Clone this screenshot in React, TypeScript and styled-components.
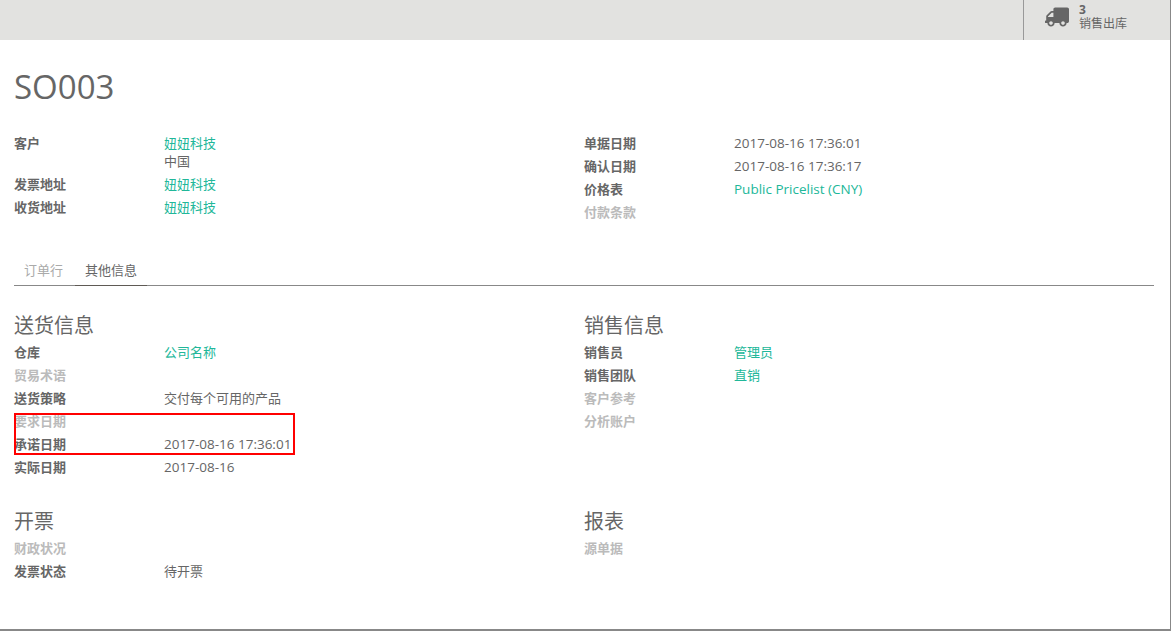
import React from 'react';
import styled, { createGlobalStyle } from 'styled-components';
import { FaTruck } from 'react-icons/fa';

const Global = createGlobalStyle`
  html, body { margin: 0; padding: 0; background: #fff; }
  body {
    font-family: "Open Sans", "Noto Sans CJK SC", sans-serif;
    font-size: 13px;
    color: #666;
  }
`;

const Page = styled.div`
  position: relative;
  width: 1171px;
  height: 631px;
  box-sizing: border-box;
  border-right: 1px solid #888;
  border-bottom: 2px solid #888;
  overflow: hidden;
`;

const ButtonBox = styled.div`
  height: 40px;
  background: #e2e2e0;
  display: flex;
  justify-content: flex-end;
`;

const StatButton = styled.div`
  width: 147px;
  box-sizing: border-box;
  border-left: 1px solid #999;
  display: flex;
  align-items: center;
  padding-left: 21px;
  gap: 10px;
`;

const TruckIcon = styled(FaTruck)`
  font-size: 24px;
  color: #666;
  transform: scaleX(-1);
  margin-top: -7px;
`;

const StatText = styled.div`
  display: flex;
  flex-direction: column;
  font-size: 12px;
  color: #666;
  margin-top: -5px;
`;

const StatCount = styled.span`
  font-weight: 700;
  line-height: 12px;
`;

const StatLabel = styled.span`
  line-height: 16px;
`;

const Sheet = styled.div`
  padding: 0 16px 0 14px;
`;

const Title = styled.h1`
  margin: 0;
  padding-top: 25px;
  height: 92px;
  box-sizing: border-box;
  font-size: 33px;
  line-height: 44px;
  font-weight: 400;
  color: #666;
`;

const Columns = styled.div<{ $top?: number }>`
  display: grid;
  grid-template-columns: 570px 1fr;
  margin-top: ${(p) => p.$top ?? 0}px;
`;

const Col = styled.div``;

const Row = styled.div`
  display: grid;
  grid-template-columns: 150px 1fr;
  line-height: 23px;
  min-height: 23px;
`;

const Label = styled.div<{ $muted?: boolean }>`
  font-weight: 700;
  color: ${(p) => (p.$muted ? '#bbb' : '#666')};
`;

const Value = styled.div<{ $link?: boolean; $latin?: boolean }>`
  color: ${(p) => (p.$link ? '#21b799' : '#666')};
  font-size: ${(p) => (p.$latin ? '13.5px' : '13px')};
`;

const AddressLine = styled.div`
  margin-top: -5px;
  color: #666;
`;

const Tabs = styled.div`
  display: flex;
  margin-top: 31px;
  height: 30px;
  border-bottom: 1px solid #888;
`;

const Tab = styled.div<{ $active?: boolean }>`
  padding: 0 10px;
  margin-right: 2px;
  line-height: 30px;
  height: 31px;
  box-sizing: border-box;
  color: ${(p) => (p.$active ? '#666' : '#aaa')};
  border-bottom: ${(p) => (p.$active ? '1px solid #5f5a55' : 'none')};
`;

const GroupTitle = styled.h2`
  margin: 0;
  font-size: 20px;
  font-weight: 400;
  line-height: 30px;
  height: 30px;
  color: #666;
`;

const Mark = styled.div`
  position: absolute;
  left: 14px;
  top: 413px;
  width: 281px;
  height: 42px;
  box-sizing: border-box;
  border: 2px solid #f00;
`;

export default function App() {
  return (
    <Page>
      <Global />
      <ButtonBox>
        <StatButton>
          <TruckIcon />
          <StatText>
            <StatCount>3</StatCount>
            <StatLabel>销售出库</StatLabel>
          </StatText>
        </StatButton>
      </ButtonBox>
      <Sheet>
        <Title>SO003</Title>
        <Columns>
          <Col>
            <Row>
              <Label>客户</Label>
              <Value $link>
                妞妞科技
                <AddressLine>中国</AddressLine>
              </Value>
            </Row>
            <Row><Label>发票地址</Label><Value $link>妞妞科技</Value></Row>
            <Row><Label>收货地址</Label><Value $link>妞妞科技</Value></Row>
          </Col>
          <Col>
            <Row><Label>单据日期</Label><Value $latin>2017-08-16 17:36:01</Value></Row>
            <Row><Label>确认日期</Label><Value $latin>2017-08-16 17:36:17</Value></Row>
            <Row><Label>价格表</Label><Value $link $latin>Public Pricelist (CNY)</Value></Row>
            <Row><Label $muted>付款条款</Label><Value /></Row>
          </Col>
        </Columns>
        <Tabs>
          <Tab>订单行</Tab>
          <Tab $active>其他信息</Tab>
        </Tabs>
        <Columns $top={25}>
          <Col>
            <GroupTitle>送货信息</GroupTitle>
            <Row><Label>仓库</Label><Value $link>公司名称</Value></Row>
            <Row><Label $muted>贸易术语</Label><Value /></Row>
            <Row><Label>送货策略</Label><Value>交付每个可用的产品</Value></Row>
            <Row><Label $muted>要求日期</Label><Value /></Row>
            <Row><Label>承诺日期</Label><Value $latin>2017-08-16 17:36:01</Value></Row>
            <Row><Label>实际日期</Label><Value $latin>2017-08-16</Value></Row>
          </Col>
          <Col>
            <GroupTitle>销售信息</GroupTitle>
            <Row><Label>销售员</Label><Value $link>管理员</Value></Row>
            <Row><Label>销售团队</Label><Value $link>直销</Value></Row>
            <Row><Label $muted>客户参考</Label><Value /></Row>
            <Row><Label $muted>分析账户</Label><Value /></Row>
          </Col>
        </Columns>
        <Columns $top={28}>
          <Col>
            <GroupTitle>开票</GroupTitle>
            <Row><Label $muted>财政状况</Label><Value /></Row>
            <Row><Label>发票状态</Label><Value>待开票</Value></Row>
          </Col>
          <Col>
            <GroupTitle>报表</GroupTitle>
            <Row><Label $muted>源单据</Label><Value /></Row>
          </Col>
        </Columns>
      </Sheet>
      <Mark />
    </Page>
  );
}
